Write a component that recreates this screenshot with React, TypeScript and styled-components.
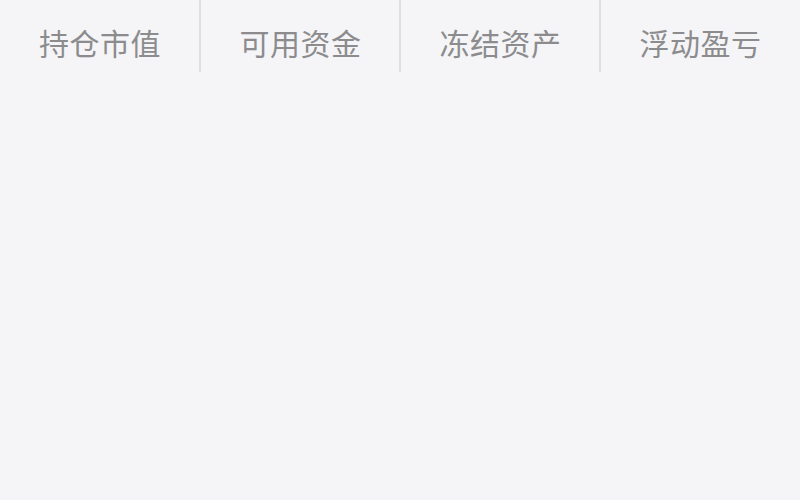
import React from 'react';
import styled, { createGlobalStyle } from 'styled-components';

const GlobalStyle = createGlobalStyle`
  html, body {
    margin: 0;
    padding: 0;
    background: #f5f5f7;
    font-family: "Noto Sans CJK SC", "Noto Sans", sans-serif;
  }
`;

const Page = styled.div`
  width: 800px;
  height: 500px;
  background: #f5f5f7;
  overflow: hidden;
`;

const StatRow = styled.div`
  display: grid;
  grid-template-columns: repeat(4, 1fr);
  height: 72px;
`;

const StatCell = styled.div<{ $divider?: boolean }>`
  display: flex;
  align-items: center;
  justify-content: center;
  border-left: ${(p) => (p.$divider ? '2px solid #dedee0' : 'none')};
  margin-left: ${(p) => (p.$divider ? '-1px' : '0')};
`;

const StatLabel = styled.span`
  font-size: 30px;
  line-height: 1;
  color: #8c8c8e;
  letter-spacing: 0.5px;
  margin-top: 12px;
`;

const labels = ['持仓市值', '可用资金', '冻结资产', '浮动盈亏'];

function App() {
  return (
    <>
      <GlobalStyle />
      <Page>
        <StatRow>
          {labels.map((label, i) => (
            <StatCell key={label} $divider={i > 0}>
              <StatLabel>{label}</StatLabel>
            </StatCell>
          ))}
        </StatRow>
      </Page>
    </>
  );
}

export default App;
